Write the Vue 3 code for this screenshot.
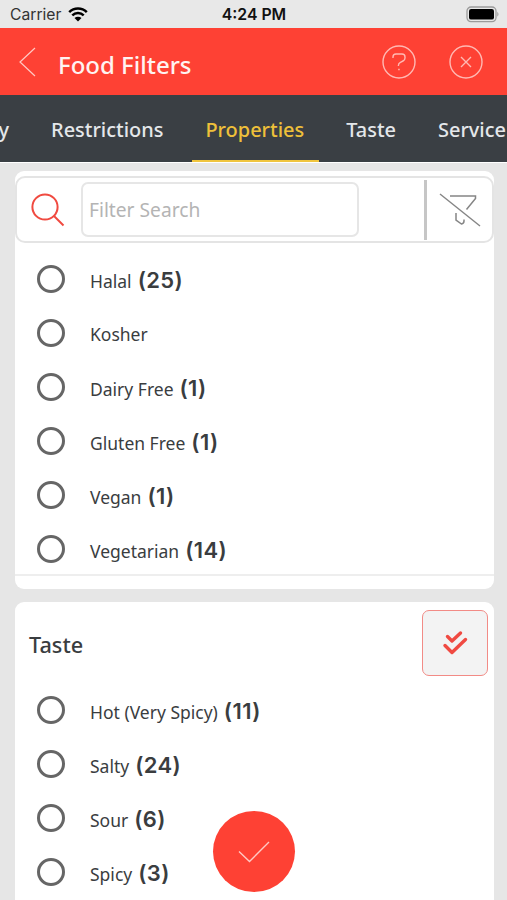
<template>
  <div class="screen">
    <div class="status-bar">
      <div class="carrier">
        <span>Carrier</span>
        <svg class="wifi" width="20" height="15" viewBox="0 0 20 15">
          <path d="M1.2 5.2a12.6 12.6 0 0 1 17.6 0M4.3 8.4a8.1 8.1 0 0 1 11.4 0" fill="none" stroke="#000" stroke-width="2.5" />
          <path d="M10 14.6L6.5 11.1a5 5 0 0 1 7 0z" fill="#000" />
        </svg>
      </div>
      <div class="clock">4:24 PM</div>
      <div class="battery-wrap">
        <svg width="34" height="17" viewBox="0 0 34 17">
          <rect x="1" y="1" width="29" height="14.6" rx="4" fill="none" stroke="#9b9b9b" stroke-width="1.3" />
          <rect x="3" y="3" width="25" height="10.6" rx="2.2" fill="#000" />
          <path d="M31.3 5.8q2.4 2.4 0 5z" fill="#9b9b9b" />
        </svg>
      </div>
    </div>

    <header class="header">
      <svg class="back" width="18" height="30" viewBox="0 0 18 30">
        <path d="M16 1L1 15l15 14" fill="none" stroke="#ffc9c4" stroke-width="1.2" />
      </svg>
      <h1 class="title">Food Filters</h1>
      <svg class="help" width="34" height="34" viewBox="0 0 34 34" fill="none" stroke="#ffb9b3" stroke-width="1.4">
        <circle cx="17" cy="17" r="16" />
        <path d="M11 13V12q0-3 3-3h6q3 0 3 3v1q0 2-2 3l-2.6 1.3q-2 1-2 3.200V21M16.200 24.500h1.500" />
      </svg>
      <svg width="34" height="34" viewBox="0 0 34 34" fill="none" stroke="#ffb9b3" stroke-width="1.4">
        <circle cx="17" cy="17" r="16" />
        <path d="M12 12l10 10M22 12L12 22" />
      </svg>
    </header>

    <nav class="tabs">
      <div
        v-for="tab in tabs"
        :key="tab"
        class="tab"
        :class="{ active: tab === activeTab }"
        @click="activeTab = tab"
      >{{ tab }}</div>
    </nav>

    <main class="content">
      <section class="card first">
        <div class="search-bar">
          <svg class="search-icon" width="34" height="34" viewBox="0 0 34 34" fill="none" stroke="#f04a40" stroke-width="2">
            <circle cx="14" cy="14" r="12.6" />
            <path d="M23 23l9.5 9.5" />
          </svg>
          <input v-model="search" class="search-input" placeholder="Filter Search" />
          <div class="clear-filter">
            <svg width="42" height="34" viewBox="0 0 42 34" fill="none" stroke="#858585" stroke-width="1.5">
              <path d="M1 1l40 32" />
              <path d="M11 3h25.500v2.500l-9 11M17 20v7l5.500 4q2.500-.500 2.500-3v-1.500" />
            </svg>
          </div>
        </div>
        <div class="options">
          <div v-for="item in properties" :key="item.name" class="option">
            <span class="radio"></span>
            <span class="name">{{ item.name }}</span>
            <span v-if="item.count" class="count">({{ item.count }})</span>
          </div>
        </div>
        <div class="card-footer"></div>
      </section>

      <section class="card last">
        <div class="card-header">
          <h2>Taste</h2>
          <button class="select-all">
            <svg width="26" height="26" viewBox="0 0 26 26" fill="none" stroke="#f04a42" stroke-width="3.4" stroke-linecap="round" stroke-linejoin="round">
              <path d="M5.500 6.500l4.500 4.500 8.500-8" />
              <path d="M3 15.500l7 7 13.500-13" />
            </svg>
          </button>
        </div>
        <div class="options">
          <div v-for="item in tastes" :key="item.name" class="option">
            <span class="radio"></span>
            <span class="name">{{ item.name }}</span>
            <span v-if="item.count" class="count">({{ item.count }})</span>
          </div>
        </div>
      </section>
    </main>

    <button class="apply">
      <svg width="32" height="22" viewBox="0 0 32 22">
        <path d="M1 10.500l10.500 10L31 1" fill="none" stroke="#ffc9c4" stroke-width="1.4" />
      </svg>
    </button>
  </div>
</template>

<script setup>
import { ref } from 'vue'

const tabs = ['y', 'Restrictions', 'Properties', 'Taste', 'Service']
const activeTab = ref('Properties')
const search = ref('')

const properties = [
  { name: 'Halal', count: 25 },
  { name: 'Kosher', count: 0 },
  { name: 'Dairy Free', count: 1 },
  { name: 'Gluten Free', count: 1 },
  { name: 'Vegan', count: 1 },
  { name: 'Vegetarian', count: 14 }
]

const tastes = [
  { name: 'Hot (Very Spicy)', count: 11 },
  { name: 'Salty', count: 24 },
  { name: 'Sour', count: 6 },
  { name: 'Spicy', count: 3 }
]
</script>

<style>
body {
  margin: 0;
  overflow: hidden;
}
</style>

<style scoped>
.screen {
  position: relative;
  display: flex;
  flex-direction: column;
  width: 507px;
  height: 900px;
  overflow: hidden;
  background: #e6e6e6;
  font-family: 'Noto Sans', sans-serif;
  color: #3a3d3f;
}

.screen * {
  box-sizing: border-box;
}

.status-bar {
  display: grid;
  grid-template-columns: 1fr auto 1fr;
  align-items: center;
  flex: none;
  height: 28px;
  padding: 1px 7px 0 10px;
  background: #e8e8e8;
  font-family: Inter, sans-serif;
  font-size: 16px;
}

.carrier {
  display: flex;
  align-items: center;
  gap: 7px;
  font-size: 15.7px;
  color: #333;
}

.clock {
  margin-left: -2px;
  font-weight: 600;
  font-size: 15.8px;
  color: #111;
}

.battery-wrap {
  display: flex;
  justify-content: flex-end;
}

.header {
  display: flex;
  align-items: center;
  flex: none;
  height: 67px;
  padding: 0 24px 0 19px;
  background: #fe4134;
}

.title {
  flex: 1;
  margin: 6px 0 0 21px;
  font-size: 24px;
  font-weight: 500;
  line-height: 34px;
  color: #fff3f1;
}

.help {
  margin-right: 33px;
}

.tabs {
  display: flex;
  flex: none;
  gap: 14px;
  height: 68px;
  background: #3a3f44;
  border-bottom: 1px solid #fff;
}

.tab {
  flex: none;
  padding: 20px 14.5px 0 13.5px;
  border-bottom: 2px solid transparent;
  font-size: 19.95px;
  font-weight: 500;
  line-height: 30px;
  color: #e4e7ea;
}

.tab:first-child {
  margin-left: -1.5px;
  padding-left: 0;
}

.tab.active {
  color: #eec03a;
  border-color: #f0c53e;
}

.content {
  display: flex;
  flex: 1;
  flex-direction: column;
  gap: 13px;
  min-height: 0;
  padding: 8px 13.5px 0 15px;
}

.card {
  flex: none;
  background: #fff;
  border-radius: 9px;
}

.card.first {
  padding-top: 5px;
}

.card.last {
  padding-bottom: 20px;
}

.search-bar {
  display: flex;
  align-items: center;
  height: 67px;
  padding-left: 14px;
  border: 2px solid #e4e4e4;
  border-radius: 10px;
}

.search-icon {
  flex: none;
  margin-right: 16px;
}

.search-input {
  width: 278px;
  height: 55px;
  padding: 0 6px;
  border: 2px solid #e6e6e6;
  border-radius: 7px;
  outline: none;
  font-family: inherit;
  font-size: 19.2px;
  color: #333;
}

.search-input::placeholder {
  color: #b4b4b4;
}

.clear-filter {
  display: flex;
  align-items: center;
  justify-content: center;
  width: 68px;
  height: 60px;
  margin-left: auto;
  padding-left: 2px;
  border-left: 3px solid #c6c6c6;
}

.options {
  padding: 9px 0 0;
}

.option {
  display: flex;
  align-items: baseline;
  height: 54px;
  padding: 10px 0 0 22px;
  line-height: 36px;
}

.radio {
  align-self: flex-start;
  flex: none;
  width: 28px;
  height: 28px;
  margin: 3px 25px 0 0;
  border: 3px solid #666;
  border-radius: 50%;
}

.name {
  font-size: 17.5px;
}

.count {
  margin-left: 6px;
  font-family: Inter, sans-serif;
  font-size: 22px;
  font-weight: 600;
  letter-spacing: 0.4px;
}

.card-footer {
  height: 15px;
  margin-top: -2px;
  border-top: 2px solid #eee;
}

.card-header {
  display: flex;
  justify-content: space-between;
  height: 72px;
  padding: 8px 6px 0 14px;
}

.card-header h2 {
  margin: 20px 0 0;
  font-size: 21.7px;
  font-weight: 500;
  line-height: 30px;
}

.select-all {
  display: flex;
  align-items: center;
  justify-content: center;
  width: 66px;
  height: 66px;
  padding: 0;
  border: 1.5px solid #f28b86;
  border-radius: 7px;
  background: #f3f3f3;
}

.apply {
  position: absolute;
  left: 213px;
  bottom: 8px;
  display: flex;
  align-items: center;
  justify-content: center;
  width: 82px;
  height: 81px;
  padding: 0;
  border: 0;
  border-radius: 50%;
  background: #fe4134;
}
</style>
